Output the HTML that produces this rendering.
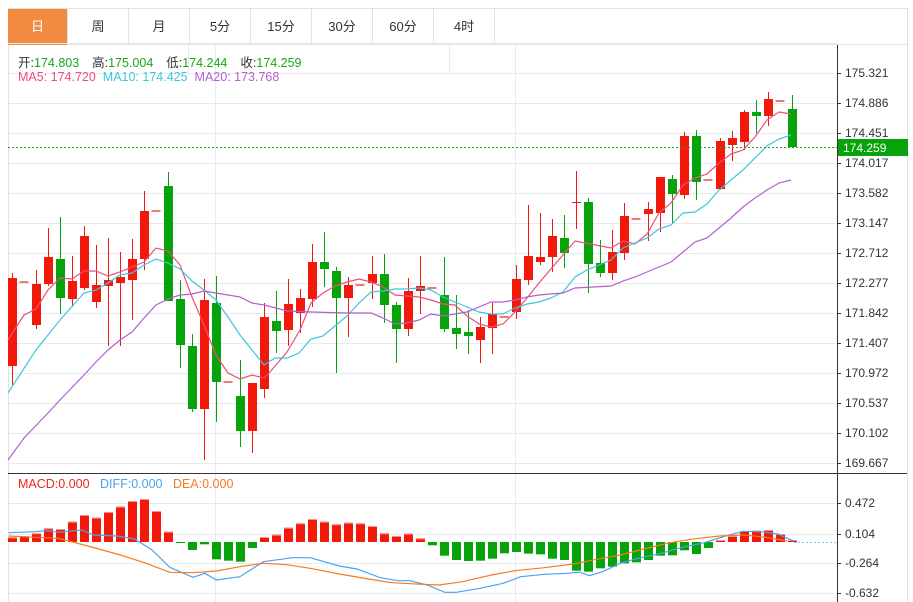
<!DOCTYPE html>
<html><head><meta charset="utf-8">
<style>
*{margin:0;padding:0;box-sizing:border-box}
body{width:913px;height:602px;background:#fff;overflow:hidden;position:relative;font-family:"Liberation Sans","Noto Sans CJK SC",sans-serif}
.tabs{position:absolute;left:8px;top:8px;height:37px;width:899px;border-top:1px solid #dfe3e8;border-bottom:1px solid #dfe3e8;display:flex}
.tab{width:61px;height:36px;line-height:36px;text-align:center;font-size:13px;color:#333;border-right:1px solid #dfe3e8}
.tab.on{background:#f28b3f;color:#fff;width:60px}
.lg{position:absolute;left:18px;font-size:12.5px;white-space:nowrap}
svg{position:absolute;left:0;top:0}
</style></head><body>
<div class="tabs"><div class="tab on">日</div><div class="tab">周</div><div class="tab">月</div><div class="tab">5分</div><div class="tab">15分</div><div class="tab">30分</div><div class="tab">60分</div><div class="tab">4时</div></div>
<svg id="s" width="913" height="602" xmlns="http://www.w3.org/2000/svg"></svg>
<div class="lg" style="top:52px;color:#333;word-spacing:3px">开:<span style="color:#1aa51a">174.803</span>&nbsp; 高:<span style="color:#1aa51a">175.004</span>&nbsp; 低:<span style="color:#1aa51a">174.244</span>&nbsp; 收:<span style="color:#1aa51a">174.259</span></div>
<div class="lg" style="top:70px"><span style="color:#ee4d7c">MA5: 174.720</span>&nbsp; <span style="color:#3ec5dd">MA10: 174.425</span>&nbsp; <span style="color:#b35fd0">MA20: 173.768</span></div>
<div class="lg" style="top:477px;font-size:12.5px"><span style="color:#f2251b">MACD:0.000</span>&nbsp;&nbsp; <span style="color:#4aa3f0">DIFF:0.000</span>&nbsp;&nbsp; <span style="color:#f57c1f">DEA:0.000</span></div>
<script>
var s='';
function L(x1,y1,x2,y2,c,w,d){s+='<line x1="'+x1+'" y1="'+y1+'" x2="'+x2+'" y2="'+y2+'" stroke="'+c+'" stroke-width="'+(w||1)+'"'+(d?' stroke-dasharray="'+d+'"':'')+'/>';}
function R(x,y,w,h,c){s+='<rect x="'+x+'" y="'+y+'" width="'+w+'" height="'+Math.max(h,1)+'" fill="'+c+'"/>';}
function T(x,y,t,c,fs){s+='<text x="'+x+'" y="'+y+'" fill="'+(c||'#333')+'" font-size="'+(fs||12)+'" font-family="Liberation Sans, sans-serif">'+t+'</text>';}
function P(pts,c){s+='<polyline fill="none" stroke="'+c+'" stroke-width="1.2" points="'+pts.map(function(p){return p.join(',')}).join(' ')+'"/>';}
var G='#e6ebf0';
for(var y=73;y<=463;y+=30)L(8,y+.5,837,y+.5,G);
L(8,43.5,837,43.5,G);
L(215.5,45,215.5,602,G);L(515.5,45,515.5,602,G);
L(188.5,45,188.5,73,G);L(449.5,45,449.5,73,G);
[503,534,563,593].forEach(function(y){L(8,y+.5,837,y+.5,G)});
L(8.5,45,8.5,602,'#dfe3e8');L(907.5,8,907.5,602,'#dfe3e8');
L(837.5,45,837.5,602,'#333');
L(8,473.5,907,473.5,'#333');
var labs=['175.321','174.886','174.451','174.017','173.582','173.147','172.712','172.277','171.842','171.407','170.972','170.537','170.102','169.667'];
labs.forEach(function(t,i){var y=73+i*30;L(837,y+.5,841,y+.5,'#333');T(845,y+4,t,'#333',12);});
[['0.472',503],['0.104',534],['-0.264',563],['-0.632',593]].forEach(function(a){L(837,a[1]+.5,841,a[1]+.5,'#333');T(845,a[1]+4,a[0],'#333',12);});
var C=[[278,366,273,385,'r'],[281,281,281,281,'r'],[284,325,270,329,'r'],[257,284,228,286,'r'],[259,298,217,314,'g'],[281,299,256,307,'r'],[236,288,226,290,'r'],[285,302,245,308,'r'],[280,286,238,346,'r'],[277,283,252,346,'r'],[259,280,239,320,'r'],[211,259,191,270,'r'],[210,210,210,210,'r'],[186,301,172,301,'g'],[299,345,280,368,'g'],[346,409,334,412,'g'],[300,409,279,460,'r'],[303,382,276,422,'g'],[381,381,381,381,'r'],[396,431,360,447,'g'],[383,431,383,453,'r'],[317,389,303,398,'r'],[321,331,291,353,'g'],[304,330,279,346,'r'],[298,313,289,333,'r'],[262,299,244,307,'r'],[262,269,232,287,'g'],[271,298,267,373,'g'],[285,298,277,337,'r'],[284,284,284,284,'r'],[274,283,256,299,'r'],[274,305,254,323,'g'],[305,329,302,363,'g'],[291,329,278,336,'r'],[286,291,256,314,'r'],[287,287,287,287,'r'],[295,329,257,332,'g'],[328,334,295,349,'g'],[332,336,310,354,'g'],[327,340,317,363,'r'],[314,328,303,354,'r'],[316,316,316,316,'r'],[279,312,265,319,'r'],[256,280,205,285,'r'],[257,262,213,265,'r'],[236,257,219,272,'r'],[238,253,215,268,'g'],[202,202,171,229,'r'],[202,264,198,293,'g'],[263,273,240,277,'g'],[252,273,230,280,'r'],[216,253,203,260,'r'],[218,218,218,218,'r'],[209,214,202,241,'r'],[177,213,177,232,'r'],[179,194,175,223,'g'],[136,195,132,199,'r'],[136,182,130,200,'g'],[179,179,179,179,'r'],[141,189,138,190,'r'],[138,145,131,161,'r'],[112,142,110,150,'r'],[112,116,100,133,'g'],[99,116,92,126,'r'],[100,100,100,100,'r'],[109,147,95,147,'g']];
var RED='#f2190a',GRN='#06a30a';
C.forEach(function(c,i){var x=12+12*i,col=c[4]=='g'?GRN:RED;
 if(c[0]==c[1]&&c[2]==c[3]){R(x-4.5,c[0],9,2,c[4]=='g'?GRN:'#f27a74');return;}
 L(x+.5,c[2],x+.5,c[3],col);R(x-4,c[0],9,c[1]-c[0],col);});
P([[8,340],[24,315],[36,309],[48,290],[60,278],[72,279],[84,271],[96,271],[108,276],[120,272],[132,267],[144,262],[156,248],[168,251],[180,265],[192,297],[204,325],[216,355],[228,373],[240,379],[252,375],[264,378],[270,372],[287,352],[300,330],[311,303],[323,293],[335,286],[347,282],[359,279],[371,282],[383,287],[395,295],[407,296],[419,297],[431,300],[443,304],[455,305],[467,316],[479,324],[491,327],[503,324],[515,312],[527,298],[539,283],[550,270],[575,241],[611,248],[623,241],[635,244],[647,234],[659,213],[671,203],[683,185],[695,178],[707,174],[719,163],[731,154],[743,150],[755,137],[767,120],[779,112],[791,114]],'#ee4d7c');
P([[8,393],[36,350],[60,320],[84,293],[96,290],[108,283],[120,275],[132,273],[144,265],[156,259],[168,263],[180,269],[192,281],[204,290],[216,300],[228,317],[240,335],[252,350],[264,365],[275,358],[287,358],[299,353],[311,339],[323,336],[335,326],[347,316],[359,303],[371,292],[383,291],[395,289],[407,289],[419,288],[431,290],[443,297],[455,302],[467,307],[479,312],[491,314],[503,314],[515,308],[527,304],[539,302],[551,298],[563,292],[575,277],[587,270],[599,265],[611,260],[623,248],[635,243],[647,238],[659,229],[671,225],[683,213],[695,212],[707,204],[719,190],[731,180],[743,170],[755,158],[767,146],[779,139],[791,135]],'#3ec5dd');
P([[8,460],[24,438],[48,413],[60,400],[84,375],[96,362],[108,350],[120,340],[132,332],[144,318],[156,305],[168,299],[180,295],[192,294],[204,291],[216,293],[228,295],[240,297],[252,303],[264,305],[276,308],[287,311],[311,312],[347,313],[371,313],[383,318],[395,324],[407,323],[419,320],[431,314],[443,316],[455,314],[467,312],[479,307],[491,302],[503,302],[515,300],[527,297],[539,295],[550,294],[563,293],[575,288],[611,286],[623,281],[635,277],[647,272],[659,267],[671,262],[683,252],[695,242],[707,238],[719,228],[731,218],[743,207],[755,198],[767,190],[779,183],[791,180]],'#b35fd0');
L(8,147.5,837,147.5,'#1aa51a',1,'2,2');
R(838,139,70,17,GRN);T(843,152,'174.259','#fff',12);
var Z=542;
var B=[232,228,220,205,207,185,165,173,156,140,123,117,153,215,249,270,253,298,302,305,264,231,224,203,190,177,185,193,188,190,198,220,228,221,235,256,287,300,303,302,296,280,276,281,283,296,300,332,335,325,320,310,307,300,287,286,271,282,264,240,228,213,212,210,222,240];
B.forEach(function(b,i){var x=12+12*i,y=460+b/3;
 if(y<Z){R(x-4,y,9,Z-y,RED);R(x-4,y,9,1,'#f5928b');}else{R(x-4,Z,9,y-Z,GRN);}});
function M(a){return a.map(function(p){return [(p[0]/1.709).toFixed(1),(460+p[1]/3).toFixed(1)]});}
P(M([[15,218],[60,215],[80,212],[100,217],[140,210],[160,225],[200,228],[230,237],[260,270],[290,322],[330,352],[350,340],[370,360],[410,350],[450,305],[480,298],[500,293],[530,293],[580,318],[610,327],[650,353],[680,362],[700,362],[730,375],[760,397],[780,397],[820,385],[860,370],[890,350],[930,343],[970,340],[990,336],[1007,347],[1030,335],[1060,310],[1090,295],[1130,280],[1170,260],[1200,250],[1240,228],[1270,214],[1300,215],[1330,222],[1345,235],[1357,243]]),'#4aa3f0');
P(M([[15,228],[60,232],[100,235],[150,258],[200,282],[250,310],[290,337],[330,338],[370,333],[410,320],[450,310],[490,314],[530,325],[580,342],[630,357],[670,368],[720,373],[750,375],[790,365],[840,345],[880,332],[930,323],[980,312],[1020,298],[1060,285],[1100,267],[1140,250],[1180,238],[1230,228],[1270,225],[1310,232],[1345,243]]),'#f57c1f');
L(794,542.5,837,542.5,'#7fc3ec',1,'2,2');
document.getElementById('s').innerHTML=s;
</script>
</body></html>
